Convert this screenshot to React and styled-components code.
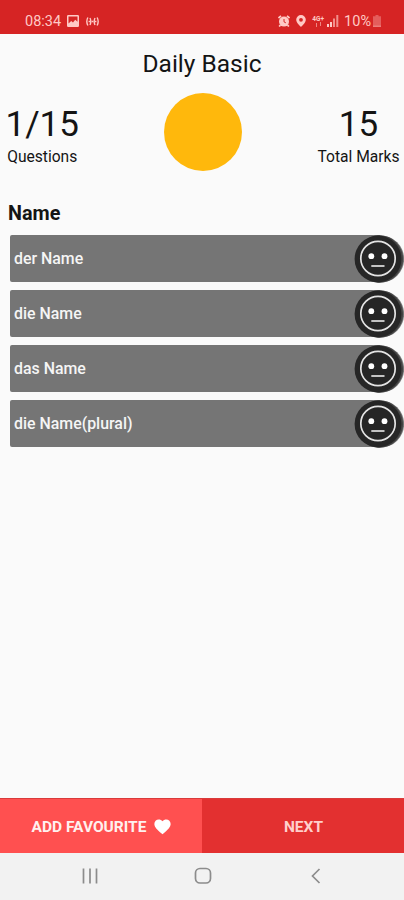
import React from "react"
import styled, { createGlobalStyle } from "styled-components"

const OPTIONS = ["der Name", "die Name", "das Name", "die Name(plural)"]

const FaceIcon = () => (
  <Face viewBox="0 0 52 48">
    <circle cx="27.5" cy="24" r="23.6" fill="#777" />
    <circle cx="26.4" cy="24" r="23.7" fill="#444" />
    <circle cx="25" cy="24" r="23.4" fill="#262626" />
    <circle cx="25" cy="23.5" r="17.2" fill="none" stroke="#e4e4e4" strokeWidth="1.7" />
    <circle cx="18.3" cy="21.2" r="2.9" fill="#fff" />
    <circle cx="31.5" cy="21.2" r="2.9" fill="#fff" />
    <path d="M18.3 31h13.2" stroke="#c4c4c4" strokeWidth="2" />
  </Face>
)

const App = () => {
  return (
    <Screen>
      <GlobalStyle />
      <StatusBar>
        <StatusGroup>
          <Time>08:34</Time>
          <StatusIcon width="12" height="12" viewBox="0 0 12 12">
            <path
              fillRule="evenodd"
              fill="currentColor"
              d="M1.2 0h9.6Q12 0 12 1.2v9.6q0 1.2-1.2 1.2H1.2Q0 12 0 10.8V1.2Q0 0 1.2 0zM1.5 1.5v7L4.2 6 6 7.5l2.2-2.8 2.3 2V1.5z"
            />
          </StatusIcon>
          <StatusIcon width="13" height="9" viewBox="0 0 13 9" $left={7}>
            <g fill="none" stroke="currentColor" strokeWidth="1.4">
              <path d="M1.9.5Q-.3 4.5 1.9 8.5M4 1Q5.6 4.5 4 8M11.1.5Q13.3 4.5 11.1 8.5M9 1Q7.4 4.5 9 8" />
              <path d="M2.6 4.5h1.6M5.6 4.5h1.8M8.8 4.5h1.6" />
            </g>
          </StatusIcon>
        </StatusGroup>
        <StatusGroup>
          <StatusIcon width="12" height="12" viewBox="0 0 12 12">
            <circle cx="6" cy="6.6" r="5" fill="currentColor" />
            <path d="M.5 3 3 .8M11.5 3 9 .8M2.4 10 1.2 11.6M9.6 10l1.2 1.6" stroke="currentColor" strokeWidth="1.7" />
            <path d="M6 4v2.8l1.8 1" fill="none" stroke="#d62424" strokeWidth="1" />
          </StatusIcon>
          <StatusIcon width="10" height="12" viewBox="0 0 10 12" $left={6}>
            <path
              fillRule="evenodd"
              fill="currentColor"
              d="M5 0a4.8 4.8 0 0 1 4.8 4.8C9.8 8 5 12 5 12S.2 8 .2 4.8A4.8 4.8 0 0 1 5 0zm0 2.9a1.9 1.9 0 1 0 0 3.8 1.9 1.9 0 0 0 0-3.8z"
            />
          </StatusIcon>
          <Network>
            <span>4G+</span>
            <svg width="7" height="5" viewBox="0 0 7 5">
              <path d="M1.5 5V1M5.5 0v4" stroke="currentColor" opacity=".6" />
            </svg>
          </Network>
          <StatusIcon width="12" height="12" viewBox="0 0 12 12" $left={3}>
            <path d="M0 9h2v3H0zM3 7h2v5H3z" fill="currentColor" />
            <path d="M6 3.5h2V12H6zM9.3 0h2v12h-2z" fill="currentColor" opacity=".65" />
          </StatusIcon>
          <Battery>10%</Battery>
          <StatusIcon width="8" height="12" viewBox="0 0 8 12" $left={2}>
            <path d="M2.5 0h3v1.2H8V12H0V1.2h2.5z" fill="currentColor" opacity=".35" />
            <path d="M0 10.5h8V12H0z" fill="currentColor" opacity=".3" />
          </StatusIcon>
        </StatusGroup>
      </StatusBar>

      <Title>Daily Basic</Title>

      <Score>
        <Stat>
          <StatValue>1/15</StatValue>
          <StatLabel>Questions</StatLabel>
        </Stat>
        <Timer />
        <Stat $right>
          <StatValue>15</StatValue>
          <StatLabel>Total Marks</StatLabel>
        </Stat>
      </Score>

      <Question>Name</Question>
      <Options>
        {OPTIONS.map(option => (
          <Option key={option}>
            <OptionLabel>{option}</OptionLabel>
            <FaceIcon />
          </Option>
        ))}
      </Options>

      <Actions>
        <ActionBtn $bg="#ff5050" $color="#fff0ee">
          ADD FAVOURITE
          <Heart viewBox="0 0 24 22">
            <path
              fill="#fff"
              d="M12 21.4 10.3 19.8C4.4 14.4.5 10.9.5 6.6.5 3.1 3.2.4 6.7.4c2 0 4 .9 5.3 2.5C13.3 1.3 15.3.4 17.3.4c3.5 0 6.2 2.7 6.2 6.2 0 4.3-3.9 7.8-9.8 13.2z"
            />
          </Heart>
        </ActionBtn>
        <ActionBtn $bg="#e33030" $color="#ffcfcb">
          NEXT
        </ActionBtn>
      </Actions>

      <NavBar>
        <NavIcon width="16" height="16" viewBox="0 0 16 16">
          <path d="M1.5.5v15M8 .5v15M14.5.5v15" />
        </NavIcon>
        <NavIcon width="18" height="18" viewBox="0 0 18 18">
          <rect x="1.5" y="1.5" width="15" height="14.5" rx="4.5" />
        </NavIcon>
        <NavIcon width="16" height="16" viewBox="0 0 16 16">
          <path d="m11.5 1-7 7 7 7" />
        </NavIcon>
      </NavBar>
    </Screen>
  )
}

export default App

const GlobalStyle = createGlobalStyle`
  * {
    box-sizing: border-box;
  }
  body {
    margin: 0;
    font-family: Roboto, sans-serif;
    background: #fafafa;
  }
`

const Screen = styled.div`
  display: flex;
  flex-direction: column;
  width: 404px;
  height: 900px;
  overflow: hidden;
  background: #fafafa;
  color: #141414;
`

const StatusBar = styled.div`
  display: flex;
  justify-content: space-between;
  height: 34px;
  padding: 8px 23px 0 25px;
  background: #d62424;
  color: #ffc9c5;
`

const StatusGroup = styled.div`
  display: flex;
  align-items: center;
  height: 26px;
`

const Time = styled.span`
  font-size: 14.5px;
  margin-right: 6px;
`

const StatusIcon = styled.svg`
  flex: none;
  margin-left: ${props => props.$left || 0}px;
`

const Network = styled.span`
  display: flex;
  flex-direction: column;
  align-items: center;
  width: 12px;
  margin-left: 6px;
  font-size: 6.5px;
  font-weight: 700;
  line-height: 6px;
`

const Battery = styled.span`
  margin-left: 5px;
  font-size: 14.5px;
`

const Title = styled.h1`
  margin: 16px 0 0;
  font-size: 24.5px;
  font-weight: 400;
  line-height: 28px;
  text-align: center;
`

const Score = styled.div`
  display: grid;
  grid-template-columns: 1fr 78px 1fr;
  height: 78px;
  margin-top: 15px;
  padding: 0 4.5px 0 5.5px;
`

const Stat = styled.div`
  display: flex;
  flex-direction: column;
  align-items: center;
  justify-self: ${props => (props.$right ? "end" : "start")};
  padding-top: 11px;
`

const StatValue = styled.div`
  font-size: 35px;
  line-height: 42px;
`

const StatLabel = styled.div`
  font-size: 15.6px;
  line-height: 23px;
`

const Timer = styled.div`
  width: 78px;
  height: 78px;
  border-radius: 50%;
  background: #ffb80c;
`

const Question = styled.h2`
  margin: 31px 0 0 8px;
  font-size: 19.8px;
  font-weight: 700;
  line-height: 24px;
`

const Options = styled.div`
  display: flex;
  flex-direction: column;
  gap: 8px;
  margin-top: 9px;
  padding-left: 10px;
`

const Option = styled.div`
  display: flex;
  align-items: center;
  justify-content: space-between;
  height: 47px;
  padding-left: 4px;
  background: linear-gradient(90deg, #757575 370px, transparent 370px);
  border-radius: 2px;
`

const OptionLabel = styled.span`
  color: #f5f5f5;
  font-size: 15.9px;
  font-weight: 500;
`

const Face = styled.svg`
  flex: none;
  width: 52px;
  height: 48px;
  margin-right: -1px;
`

const Actions = styled.div`
  display: flex;
  height: 55px;
  margin-top: auto;
`

const ActionBtn = styled.button`
  display: flex;
  align-items: center;
  justify-content: center;
  width: 50%;
  padding: 2px 0 0 1px;
  border: 0;
  border-top: 1px solid #d93a3a;
  background: ${props => props.$bg};
  color: ${props => props.$color};
  font-family: inherit;
  font-size: 15.5px;
  font-weight: 700;
`

const Heart = styled.svg`
  width: 17px;
  height: 16px;
  margin-left: 8px;
`

const NavBar = styled.div`
  display: flex;
  align-items: center;
  justify-content: space-between;
  height: 47px;
  padding: 0 80px 2px 82px;
  background: #f2f2f2;
`

const NavIcon = styled.svg`
  fill: none;
  stroke: #8c8c8c;
  stroke-width: 1.7;
`
